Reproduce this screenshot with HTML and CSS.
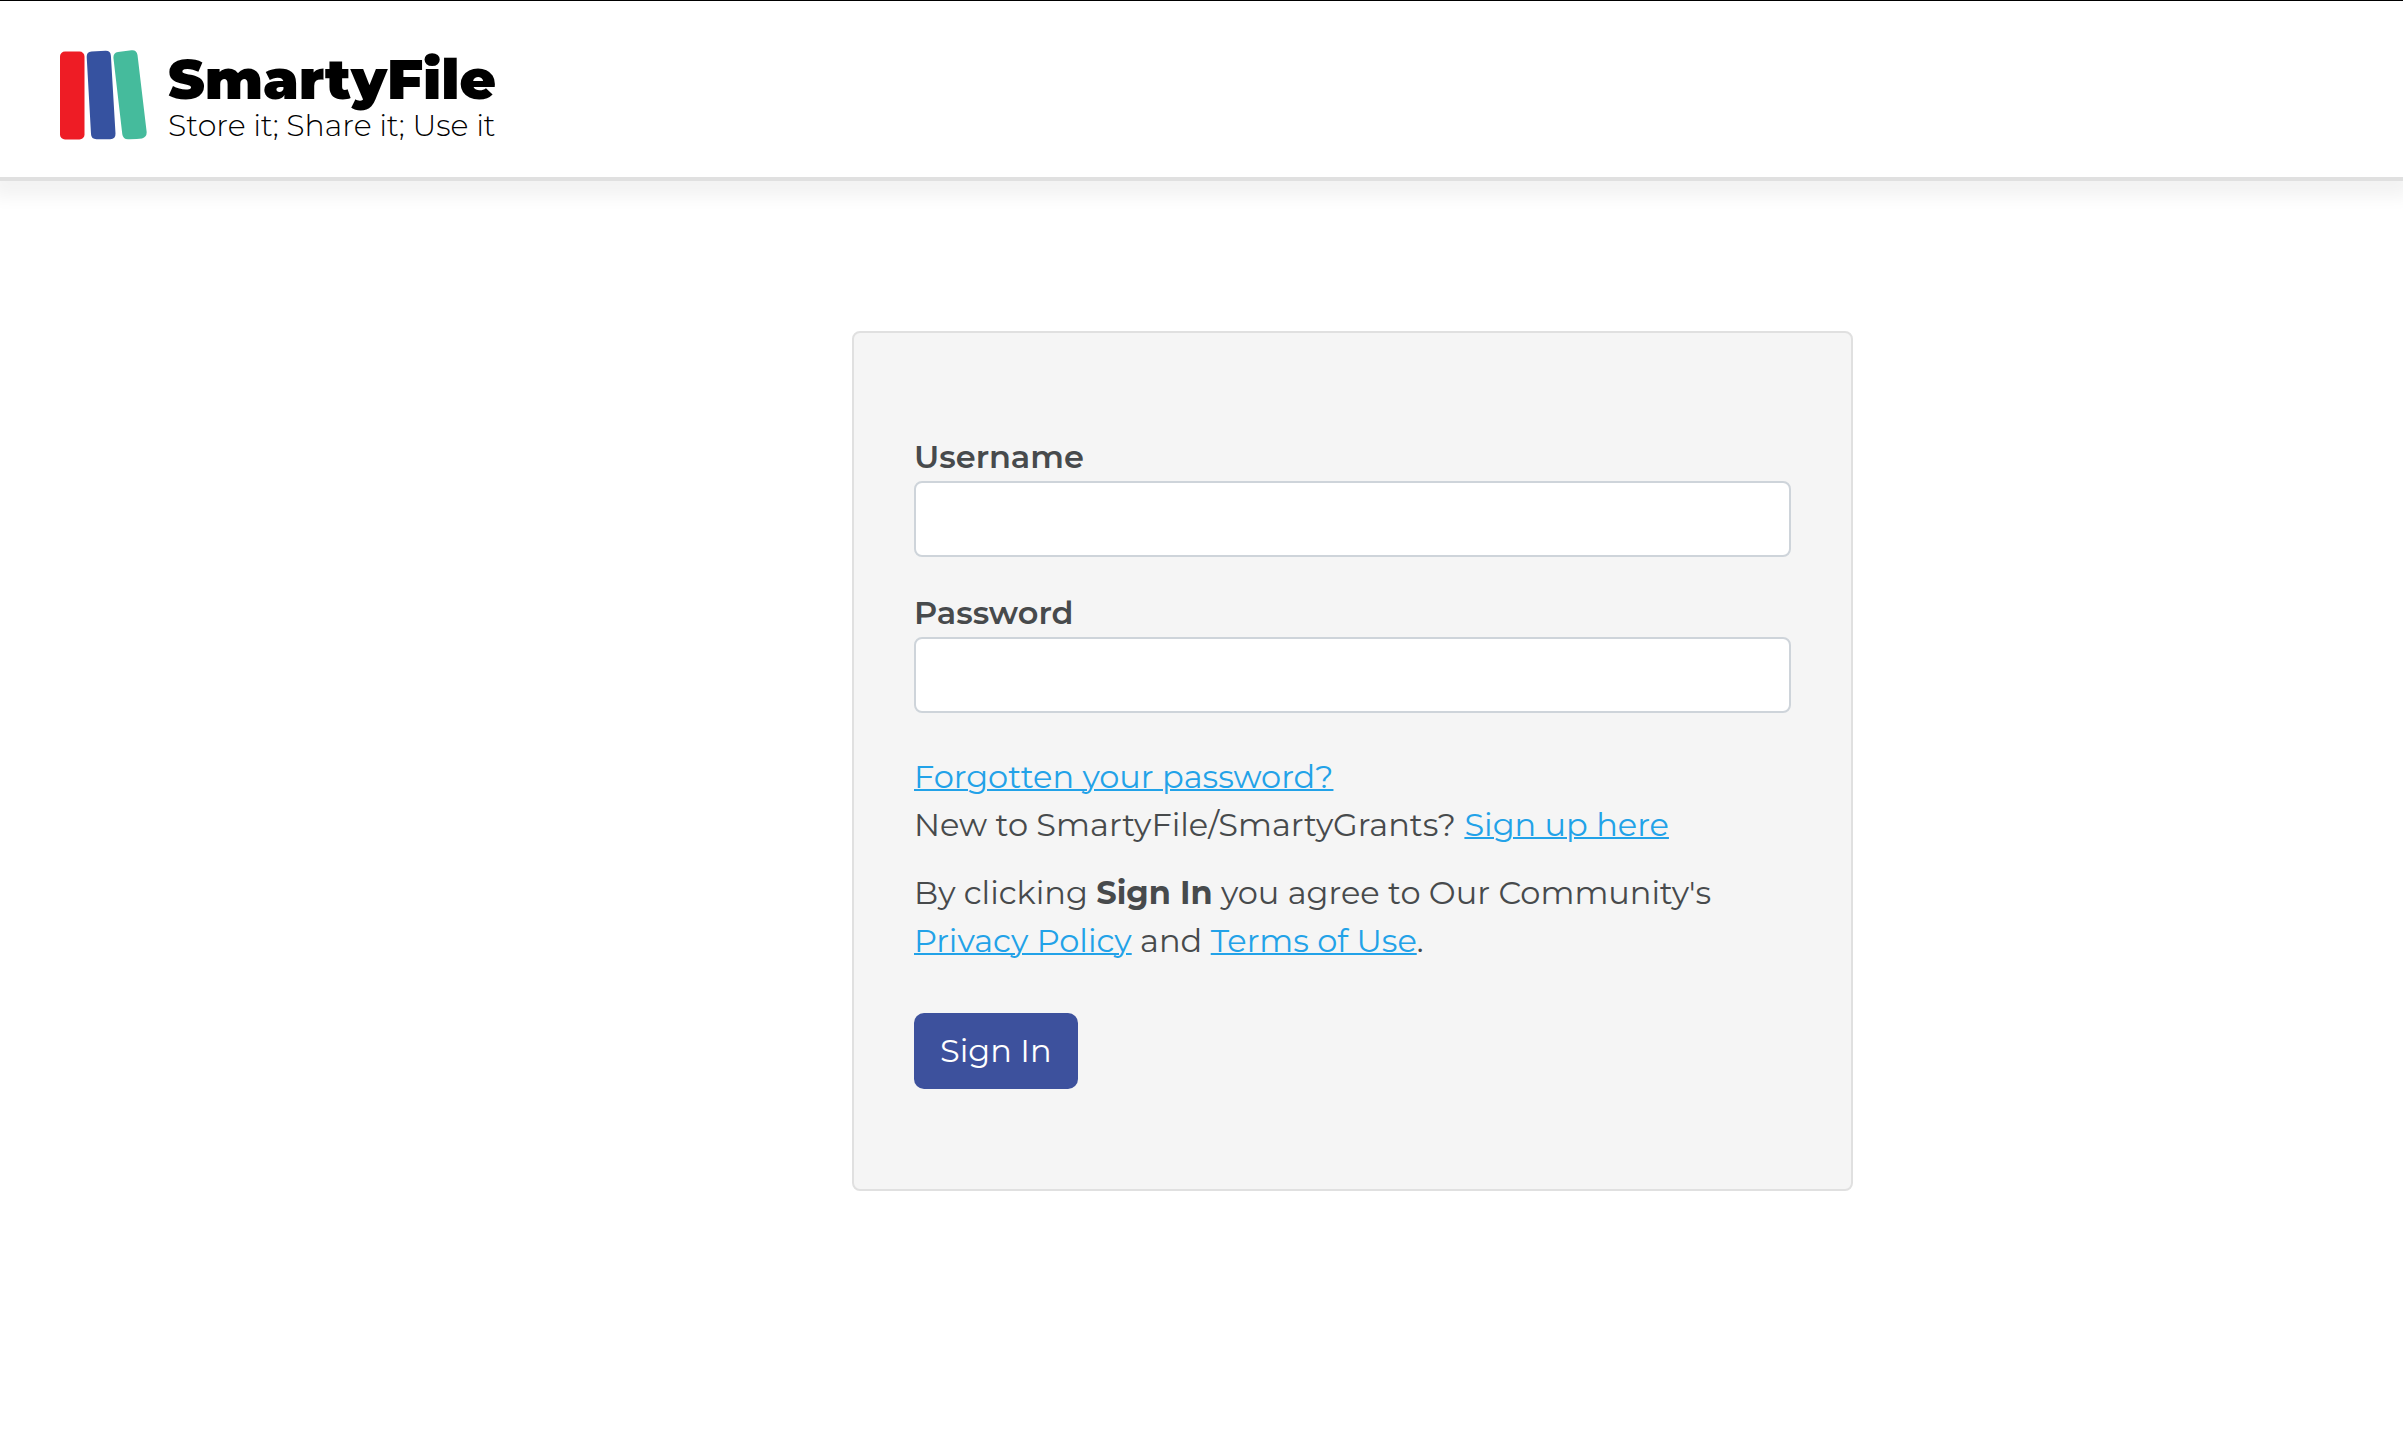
FILE: index.html
```html
<!DOCTYPE html>
<html lang="en">
<head>
<meta charset="utf-8">
<meta name="viewport" content="width=device-width, initial-scale=1">
<title>SmartyFile - Sign In</title>
<link rel="stylesheet" href="styles.css">
</head>
<body>
<header class="site-header">
  <div class="brand">
    <svg class="brand-mark" viewBox="0 0 88 90" aria-hidden="true">
      <rect x="0" y="1.500" width="24.500" height="88" rx="5" fill="#ee1c25"/>
      <path d="M31.500 1.400 45.500.800Q50.600.600 50.900 5.800L55.500 83.500Q55.700 89.200 50.200 89.200H36.500Q31.200 89.200 31 84L26.700 7Q26.500 1.700 31.500 1.400Z" fill="#3652a0"/>
      <path d="M58 2 71.500.200Q76.700-.300 77.500 5L86.600 81.500Q87.200 87 82 88.400Q77 89.300 68 89.200Q63 89.200 62.300 84.200L53.500 8.500Q52.900 2.700 58 2Z" fill="#45bb9c"/>
    </svg>
    <div class="brand-text">
      <span class="brand-name">SmartyFile</span>
      <span class="brand-tagline">Store it; Share it; Use it</span>
    </div>
  </div>
</header>
<main class="page">
  <form class="login-card">
    <div class="field">
      <label for="username">Username</label>
      <input id="username" name="username" type="text">
    </div>
    <div class="field">
      <label for="password">Password</label>
      <input id="password" name="password" type="password">
    </div>
    <div class="notes">
      <p><a href="#forgotten">Forgotten your password?</a><br>
      New to SmartyFile/SmartyGrants? <a href="#signup">Sign up here</a></p>
      <p>By clicking <strong>Sign In</strong> you agree to Our Community's<br>
      <a href="#privacy">Privacy Policy</a> and <a href="#terms">Terms of Use</a>.</p>
    </div>
    <button class="sign-in" type="submit">Sign In</button>
  </form>
</main>
</body>
</html>
```

FILE: styles.css
```css
* {
  box-sizing: border-box;
}

body {
  margin: 0;
  background: #fff;
  color: #474a4c;
  font-family: Montserrat, Inter, sans-serif;
  font-size: 32px;
  line-height: 48px;
}

.site-header {
  padding: 49px 60px 33px;
  border-top: 1px solid #000;
  border-bottom: 4px solid #e0e0e0;
  box-shadow: 0 8px 16px 8px rgba(0, 0, 0, 0.05);
}

.brand {
  display: flex;
  align-items: flex-start;
  gap: 20px;
  color: #000;
}

.brand-mark {
  width: 88px;
  height: 90px;
}

.brand-text {
  display: flex;
  flex-direction: column;
}

.brand-name {
  font-size: 56px;
  font-weight: 900;
  line-height: 58px;
}

.brand-tagline {
  font-size: 30px;
  font-weight: 300;
  line-height: 36px;
}

.page {
  display: grid;
  grid-template-columns: 852fr minmax(min-content, 1001fr) 550fr;
  padding: 150px 0;
}

.login-card {
  grid-column: 2;
  padding: 100px 60px;
  border: 2px solid #e0e0e0;
  border-radius: 8px;
  background: #f5f5f5;
}

.field {
  display: flex;
  flex-direction: column;
  margin-bottom: 32px;
}

.field label {
  font-weight: 600;
}

.field input {
  width: 100%;
  padding: 12px 24px;
  border: 2px solid #ced4da;
  border-radius: 8px;
  background: #fff;
  color: inherit;
  font: inherit;
}

.notes {
  display: flex;
  flex-direction: column;
  gap: 20px;
  margin: 40px 0 48px;
}

.notes p {
  margin: 0;
}

a {
  color: #22a2e8;
  text-decoration: underline;
  text-decoration-thickness: 2px;
}

.sign-in {
  padding: 14px 26px;
  border: 0;
  border-radius: 10px;
  background: #3d519d;
  color: #fff;
  font: inherit;
}
```
